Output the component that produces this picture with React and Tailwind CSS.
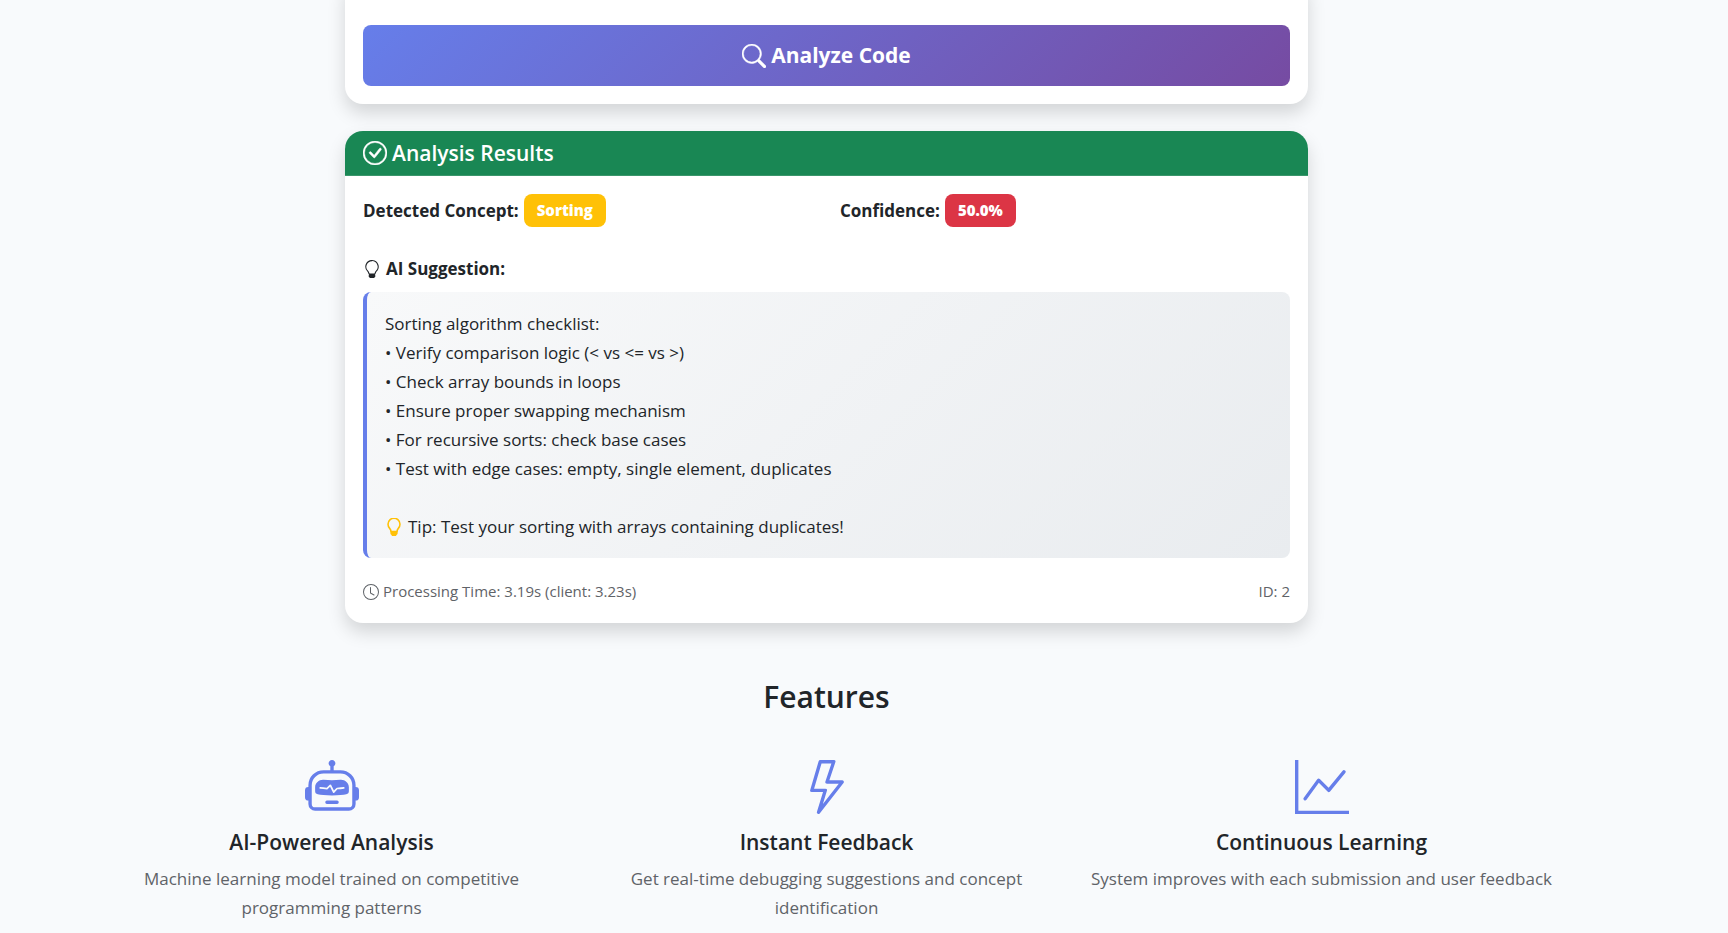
import {
  BsCheckCircle,
  BsClock,
  BsGraphUp,
  BsLightbulb,
  BsLightning,
  BsRobot,
  BsSearch,
} from "react-icons/bs";

const checklist = [
  "Verify comparison logic (< vs <= vs >)",
  "Check array bounds in loops",
  "Ensure proper swapping mechanism",
  "For recursive sorts: check base cases",
  "Test with edge cases: empty, single element, duplicates",
];

const features = [
  {
    icon: BsRobot,
    title: "AI-Powered Analysis",
    text: "Machine learning model trained on competitive programming patterns",
  },
  {
    icon: BsLightning,
    title: "Instant Feedback",
    text: "Get real-time debugging suggestions and concept identification",
  },
  {
    icon: BsGraphUp,
    title: "Continuous Learning",
    text: "System improves with each submission and user feedback",
  },
];

function TipBulb() {
  return (
    <svg viewBox="0 0 16 16" className="size-[18px] text-[#ffc107]" aria-hidden="true">
      <path
        d="M5.4 12c-.1-1.5-.7-2.2-1.4-3A5.3 5.3 0 1 1 12 9c-.7.8-1.3 1.5-1.4 3z"
        fill="none"
        stroke="currentColor"
        strokeWidth="1.4"
      />
      <path d="M4.8 11.5h6.4v2.2a1.3 1.3 0 0 1-.8 1.2c-.3.8-.7 1.1-1.3 1.1H6.9c-.6 0-1-.3-1.3-1.1a1.3 1.3 0 0 1-.8-1.2z" fill="currentColor" />
    </svg>
  );
}

function Badge({ className, children }) {
  return (
    <span
      className={`inline-flex h-[33px] items-center rounded-lg px-[13px] text-[15px] font-extrabold text-white ${className}`}
    >
      {children}
    </span>
  );
}

function AnalyzeCard() {
  return (
    <section className="-mt-6 rounded-[18px] bg-white px-[18px] pt-[49px] pb-[18px] shadow-[0_9px_18px_rgba(0,0,0,0.15)]">
      <button
        type="button"
        className="flex h-[61px] w-full items-center justify-center gap-[5px] rounded-lg bg-[linear-gradient(135deg,#667eea_0%,#764ba2_100%)] text-[21px] font-bold text-white"
      >
        <BsSearch className="size-6" strokeWidth="0.3" aria-hidden="true" />
        Analyze Code
      </button>
    </section>
  );
}

function ResultsCard() {
  return (
    <section className="mt-[27px] overflow-hidden rounded-[18px] bg-white shadow-[0_9px_18px_rgba(0,0,0,0.15)]">
      <h2 className="flex h-[45px] items-center gap-[5px] border-b border-[#3a966b] bg-[#198754] px-[18px] text-[21px] font-semibold text-white">
        <BsCheckCircle className="size-6" strokeWidth="0.3" aria-hidden="true" />
        Analysis Results
      </h2>
      <div className="p-[18px]">
        <div className="grid grid-cols-2 gap-[27px]">
          <p className="flex items-center gap-[5px]">
            <strong>Detected Concept:</strong>
            <Badge className="bg-[#ffc107]">Sorting</Badge>
          </p>
          <p className="flex items-center gap-[5px]">
            <strong>Confidence:</strong>
            <Badge className="bg-[#dc3545]">50.0%</Badge>
          </p>
        </div>
        <h3 className="mt-[27px] flex items-center gap-[5px] font-bold">
          <BsLightbulb className="size-[18px]" aria-hidden="true" />
          AI Suggestion:
        </h3>
        <div className="mt-[9px] rounded-lg border-l-4 border-[#667eea] bg-[linear-gradient(135deg,#f8f9fa_0%,#e9ecef_100%)] px-[18px] py-[17px]">
          <p>Sorting algorithm checklist:</p>
          <ul className="mb-[29px]">
            {checklist.map((item) => (
              <li key={item}>• {item}</li>
            ))}
          </ul>
          <p className="flex items-center gap-[5px]">
            <TipBulb />
            Tip: Test your sorting with arrays containing duplicates!
          </p>
        </div>
        <div className="mt-5 flex items-center justify-between text-[15px] leading-[27px] text-[#5f6368]">
          <span className="flex items-center gap-1">
            <BsClock className="size-4" aria-hidden="true" />
            Processing Time: 3.19s (client: 3.23s)
          </span>
          <span>ID: 2</span>
        </div>
      </div>
    </section>
  );
}

function Features() {
  return (
    <section className="mt-[54px] text-center">
      <h2 className="text-[30px] leading-10 font-semibold">Features</h2>
      <div className="mt-[43px] grid grid-cols-3">
        {features.map(({ icon: Icon, title, text }) => (
          <article key={title} className="flex flex-col items-center px-4">
            <Icon className="size-[54px] text-[#667eea]" aria-hidden="true" />
            <h3 className="mt-[15px] text-[21px] leading-[27px] font-semibold">{title}</h3>
            <p className="mt-2 text-[#5f6368]">{text}</p>
          </article>
        ))}
      </div>
    </section>
  );
}

export default function App() {
  return (
    <div className="flow-root min-h-screen bg-[#f8fafc] pr-[75px] font-['Open_Sans','Noto_Sans',sans-serif] text-[17px] leading-[29px] text-[#212529]">
      <main className="mx-auto max-w-[1485px]">
        <div className="mx-auto max-w-[963px]">
          <AnalyzeCard />
          <ResultsCard />
        </div>
        <Features />
      </main>
    </div>
  );
}
